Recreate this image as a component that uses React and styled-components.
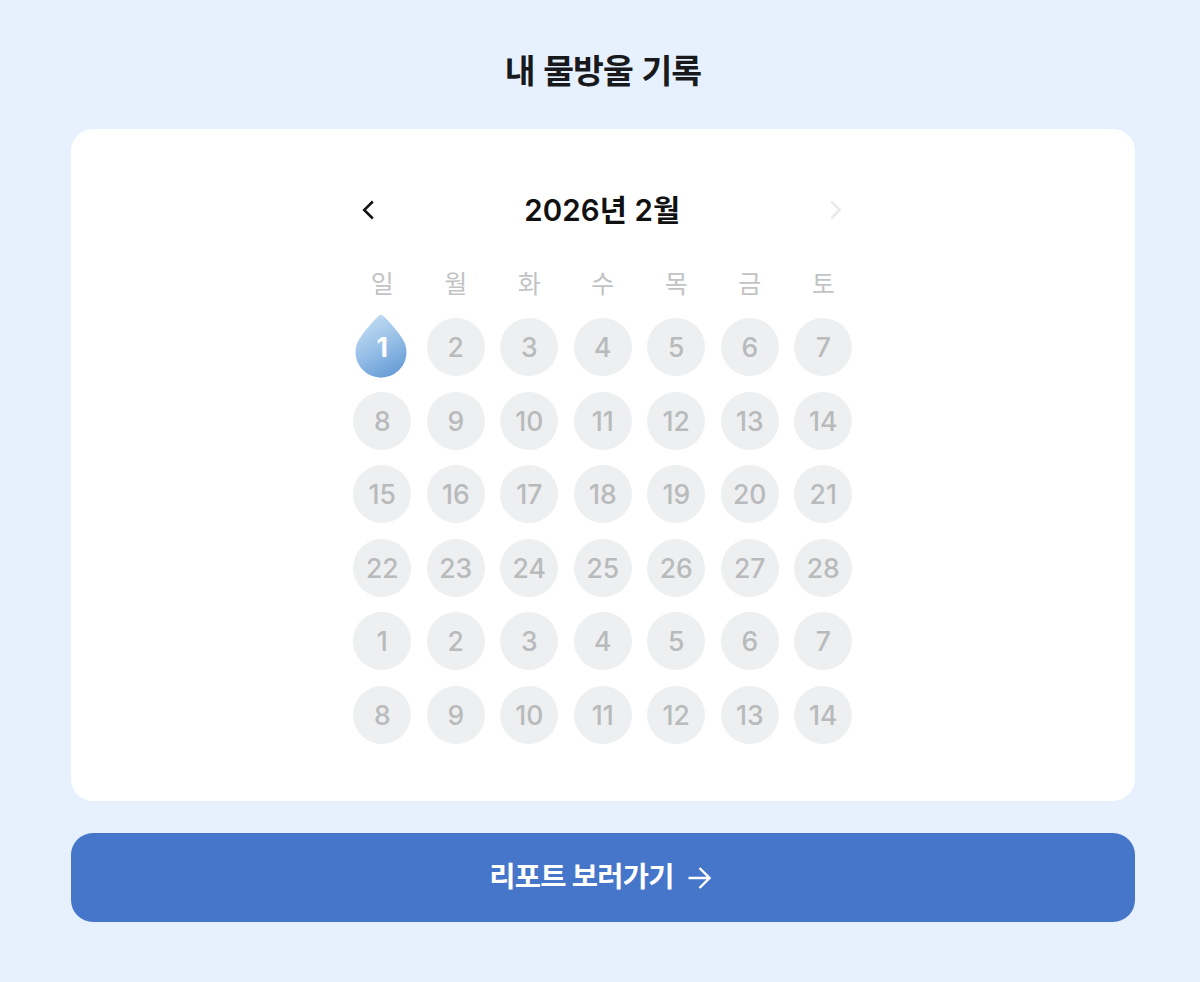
import React from "react";
import styled, { createGlobalStyle } from "styled-components";

const WEEKDAYS = ["일", "월", "화", "수", "목", "금", "토"];
const WEEKS = [
	[1, 2, 3, 4, 5, 6, 7],
	[8, 9, 10, 11, 12, 13, 14],
	[15, 16, 17, 18, 19, 20, 21],
	[22, 23, 24, 25, 26, 27, 28],
	[1, 2, 3, 4, 5, 6, 7],
	[8, 9, 10, 11, 12, 13, 14],
];

function Drop() {
	return (
		<DropIcon viewBox="0 0 52 63">
			<defs>
				<linearGradient id="drop" x1="0.25" y1="0" x2="0.7" y2="1">
					<stop offset="0" stopColor="#c3dcf2" />
					<stop offset="0.5" stopColor="#98c0e7" />
					<stop offset="1" stopColor="#659bd6" />
				</linearGradient>
			</defs>
			<path
				d="M23.6 1.1Q26 -1.1 28.4 1.1C33 5.3 40 13.2 45.2 20.4A25.5 25.5 0 1 1 6.8 20.4C12 13.2 19 5.3 23.6 1.1Z"
				fill="url(#drop)"
			/>
		</DropIcon>
	);
}

function App() {
	return (
		<Page>
			<GlobalStyle />
			<Title>내 물방울 기록</Title>
			<Card>
				<Calendar>
					<MonthBar>
						<ArrowButton aria-label="이전 달">
							<Chevron viewBox="0 0 12 20">
								<path d="M10.8 1.5L2.2 10L10.8 18.5" />
							</Chevron>
						</ArrowButton>
						<Month>2026년 2월</Month>
						<ArrowButton aria-label="다음 달" $disabled>
							<Chevron viewBox="0 0 12 20">
								<path d="M1.2 1.5L9.8 10L1.2 18.5" />
							</Chevron>
						</ArrowButton>
					</MonthBar>
					<Weekdays>
						{WEEKDAYS.map((day) => (
							<Weekday key={day}>{day}</Weekday>
						))}
					</Weekdays>
					<Days>
						{WEEKS.map((week, row) =>
							week.map((day, col) => {
								const filled = row === 0 && col === 0;
								return (
									<Day key={`${row}-${col}`} $filled={filled}>
										{filled && <Drop />}
										<DayNumber>{day}</DayNumber>
									</Day>
								);
							})
						)}
					</Days>
				</Calendar>
			</Card>
			<ReportButton>
				<ReportText>리포트 보러가기</ReportText>
				<ReportArrow viewBox="0 0 24 24">
					<path d="M1.5 12H22M12.5 2L22.5 12L12.5 22" />
				</ReportArrow>
			</ReportButton>
		</Page>
	);
}

export default App;

const GlobalStyle = createGlobalStyle`
	* {
		box-sizing: border-box;
	}
	body {
		margin: 0;
		background: #e7f1fe;
		font-family: Inter, "Noto Sans CJK KR", sans-serif;
	}
	button {
		padding: 0;
		border: none;
		background: none;
		font-family: inherit;
		cursor: pointer;
	}
`;
const Page = styled.main`
	min-height: 982px;
	padding: 46px 65px 60px 71px;
	display: flex;
	flex-direction: column;
	background: #e7f1fe;
`;
const Title = styled.h1`
	height: 48px;
	margin: 0 0 35px;
	color: #17191c;
	font-size: 33.5px;
	font-weight: 700;
	line-height: 50px;
	letter-spacing: -0.9px;
	word-spacing: 1.5px;
	text-align: center;
`;
const Card = styled.section`
	height: 672px;
	padding: 60px 0.5px 0 0;
	display: flex;
	justify-content: center;
	border-radius: 22px;
	background: #ffffff;
`;
const Calendar = styled.div`
	width: 499px;
`;
const MonthBar = styled.div`
	height: 42px;
	padding: 0 10px 0 9px;
	display: flex;
	align-items: center;
	justify-content: space-between;
`;
const ArrowButton = styled.button`
	height: 20px;
	display: flex;
	color: ${(props) => (props.$disabled ? "#e9eaeb" : "#111111")};
`;
const Chevron = styled.svg`
	height: 20px;
	width: 12px;
	fill: none;
	stroke: currentColor;
	stroke-width: 2.5;
`;
const Month = styled.h2`
	margin: 0;
	color: #111111;
	font-size: 29.5px;
	font-weight: 600;
	line-height: 42px;
	letter-spacing: 0.1px;
`;
const Weekdays = styled.div`
	height: 36px;
	margin-top: 35px;
	display: grid;
	grid-template-columns: repeat(7, 58px);
	column-gap: 15.5px;
`;
const Weekday = styled.span`
	color: #c2c3c4;
	font-size: 25px;
	line-height: 36px;
	text-align: center;
`;
const Days = styled.div`
	margin-top: 16px;
	display: grid;
	grid-template-columns: repeat(7, 58px);
	grid-auto-rows: 58px;
	gap: 15.5px;
`;
const Day = styled.div`
	position: relative;
	display: flex;
	align-items: center;
	justify-content: center;
	border-radius: 50%;
	background: ${(props) => (props.$filled ? "none" : "#edeff0")};
	color: ${(props) => (props.$filled ? "#ffffff" : "#b8babc")};
	font-size: 26.5px;
	font-weight: ${(props) => (props.$filled ? 700 : 500)};
`;
const DropIcon = styled.svg`
	height: 63px;
	width: 52px;
	position: absolute;
	left: 2px;
	top: -3px;
`;
const DayNumber = styled.span`
	position: relative;
	line-height: 32px;
`;
const ReportButton = styled.button`
	height: 89px;
	margin-top: 32px;
	padding-right: 6px;
	display: flex;
	align-items: center;
	justify-content: center;
	gap: 13px;
	border-radius: 22px;
	background: #4676c9;
	color: #ffffff;
`;
const ReportText = styled.span`
	padding-bottom: 2px;
	font-size: 28.5px;
	font-weight: 700;
	line-height: 40px;
	letter-spacing: -0.7px;
`;
const ReportArrow = styled.svg`
	height: 24px;
	width: 24px;
	fill: none;
	stroke: currentColor;
	stroke-width: 2.4;
`;
